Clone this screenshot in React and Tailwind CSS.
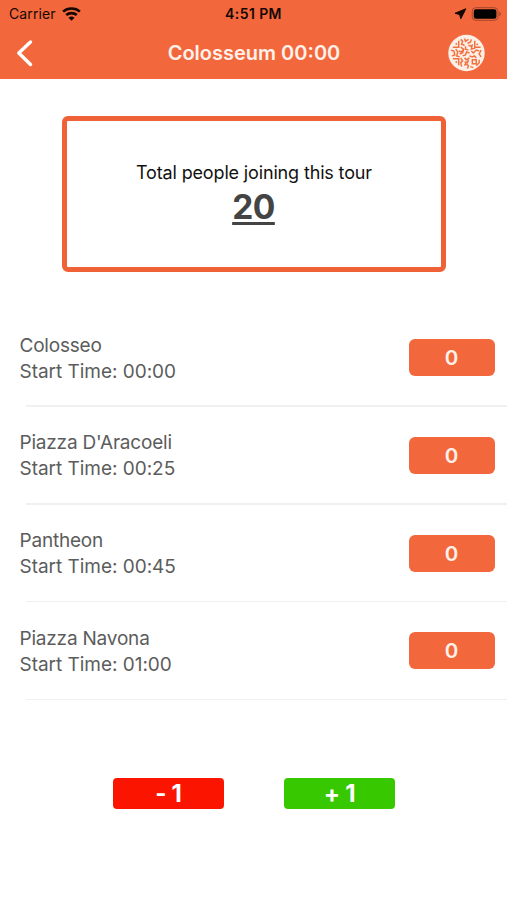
const stops = [
  { name: 'Colosseo', time: '00:00' },
  { name: "Piazza D'Aracoeli", time: '00:25' },
  { name: 'Pantheon', time: '00:45' },
  { name: 'Piazza Navona', time: '01:00' },
]

function WifiIcon() {
  return (
    <svg className="ml-1.5 h-[14px] w-[19px]" viewBox="0 0 19 14" fill="none" stroke="#160703" strokeWidth="2.6">
      <path d="M1.1 4.6C5.7.4 13.3.4 17.9 4.6" />
      <path d="M4.2 8.1C7.2 5.5 11.8 5.5 14.8 8.1" />
      <path d="M9.5 13.7 6.5 10.8C8.3 9.2 10.7 9.2 12.5 10.8Z" fill="#160703" stroke="none" />
    </svg>
  )
}

function Emblem() {
  return (
    <svg className="mr-[22px] h-[38px] w-[37px]" viewBox="0 0 38 38" fill="none">
      <circle cx="19" cy="19" r="18.7" fill="#fdeee6" />
      <g stroke="#f1703f" strokeWidth="1.5">
        <path d="M5 13h6V6.500M8 10.500l1-1.500M27.500 6.500V13h6M29.500 9.500l1 1.500M5 25h6v6.500M8 27.500l1 1.500" />
        <path d="M13 5l2 2-1 3 3 1M17 4l1 3 3-2M20 9l3-1 1-3M21 11l3 1M13 13l3 2-2 3-3-1M18 12v3l3 1M25 10l-1 5 4-1" />
        <path d="M3 16l3 1 1 4-3 1M8 15l2 3-1 4 3 1M12 20l3-1 1-3M15 22l3-1 1-3 3 1M24 17l2 2 3-3 3 1M34 16l-2 4 2 3M22 22l3 1 2-1 2 2" />
        <path d="M13 24l2 3-2 2 1 4M17 24l2 2 3-2M17 28l3 1 1-3M17 32l1-2 3 2-1 3M25 26h4v4h-4zM32 26v3l-3 3M23 33l3 1" />
      </g>
    </svg>
  )
}

export default function App() {
  return (
    <div className="flex h-[900px] w-[507px] flex-col overflow-hidden bg-white font-['Inter','Liberation_Sans',sans-serif]">
      <header className="h-[79px] bg-[#f2683c]">
        <div className="grid h-[27px] grid-cols-3 items-center text-sm leading-[27px] text-[#160703]">
          <div className="flex items-center pl-[9px]">
            <span className="tracking-[0.1px]">Carrier</span>
            <WifiIcon />
          </div>
          <div className="text-center font-semibold tracking-[0.4px]">4:51 PM</div>
          <div className="flex items-center justify-end pr-[5px]">
            <svg className="mr-[4px] h-[12px] w-[13px]" viewBox="0 0 13 12">
              <path d="M11.800.8 1 5.300l4.600 1.200 1.200 4.300z" fill="#160703" stroke="#160703" strokeLinejoin="round" />
            </svg>
            <svg className="h-[14px] w-[31px]" viewBox="0 0 31 14">
              <rect x="1.2" y=".7" width="25.8" height="12.6" rx="3.6" fill="none" stroke="#a2482c" />
              <rect x="2.8" y="2.3" width="22.6" height="9.4" rx="2.2" fill="#000" />
              <path d="M28.300 4.800c2 .6 2 3.800 0 4.400z" fill="#a2482c" />
            </svg>
          </div>
        </div>
        <div className="grid h-[52px] grid-cols-[100px_1fr_100px] items-center">
          <svg className="ml-[16px] h-[28px] w-[18px]" viewBox="0 0 18 28" fill="none" stroke="#fff" strokeWidth="3.4">
            <path d="M14.500 3 2.800 14l11.700 11.500" strokeLinejoin="round" strokeLinecap="round" />
          </svg>
          <h1 className="pl-px text-center text-xl font-semibold whitespace-nowrap text-[#fff1ea]">Colosseum 00:00</h1>
          <div className="flex justify-end">
            <Emblem />
          </div>
        </div>
      </header>

      <section className="mt-[37px] ml-[62px] flex h-[156px] w-[384px] flex-col items-center rounded-md border-[5px] border-[#ef6237] pt-[39px]">
        <p className="text-lg leading-[26px] tracking-[-0.15px] whitespace-nowrap text-[#111]">Total people joining this tour</p>
        <p className="pr-px text-[33.5px] leading-[43px] font-bold tracking-[-0.5px] text-[#444] underline decoration-[3px] underline-offset-[3px]">20</p>
      </section>

      <ul className="mt-[37px]">
        {stops.map((stop) => (
          <li key={stop.name} className="flex h-[97.8px] flex-col">
            <div className="flex flex-1 items-center justify-between pr-[12px] pl-[19.5px]">
              <div className="pt-[3px] text-[19px] leading-[26px] text-[#5c5c5c]">
                <p className="tracking-[-0.2px]">{stop.name}</p>
                <p className="tracking-[-0.03px]">Start Time: {stop.time}</p>
              </div>
              <button className="mt-[0.6px] h-[37px] w-[86px] rounded-md bg-[#f2683c] pt-px pr-px text-[20.5px] leading-[36px] font-semibold text-[#fff1ea]">0</button>
            </div>
            <div className="ml-[26px] h-[1.5px] bg-[#f0f0f0]" />
          </li>
        ))}
      </ul>

      <div className="mt-[78px] flex gap-[60px] pl-[113px] text-2xl font-bold tracking-[-0.3px] text-white">
        <button className="h-[31px] w-[111px] rounded bg-[#fb1500] leading-[31px]">- 1</button>
        <button className="h-[31px] w-[111px] rounded bg-[#38c800] leading-[31px]">+ 1</button>
      </div>
    </div>
  )
}
